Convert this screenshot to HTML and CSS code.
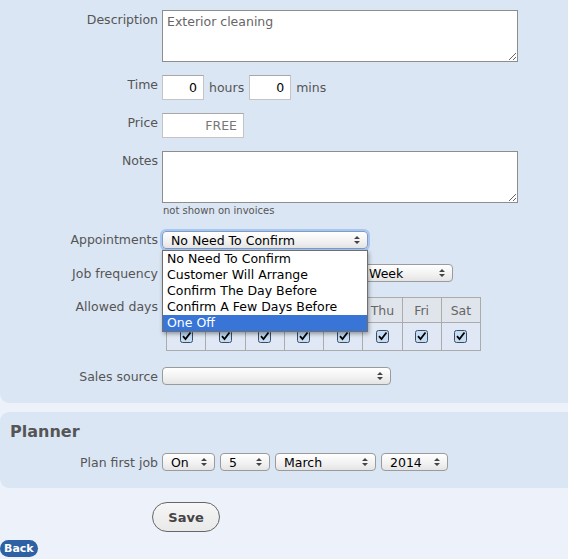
FILE: index.html
```html
<!DOCTYPE html>
<html>
<head>
<meta charset="utf-8">
<link rel="stylesheet" href="styles.css">
</head>
<body>
<div class="panel main">
  <div class="row r-desc">
    <label class="lbl">Description</label>
    <div class="field"><textarea class="area desc">Exterior cleaning</textarea></div>
  </div>
  <div class="row r-time">
    <label class="lbl">Time</label>
    <div class="field inline">
      <input class="num" value="0"><span class="unit">hours</span>
      <input class="num" value="0"><span class="unit">mins</span>
    </div>
  </div>
  <div class="row r-price">
    <label class="lbl">Price</label>
    <div class="field"><input class="price" placeholder="FREE"></div>
  </div>
  <div class="row r-notes">
    <label class="lbl">Notes</label>
    <div class="field">
      <textarea class="area notes"></textarea>
      <div class="hint">not shown on invoices</div>
    </div>
  </div>
  <div class="row r-appt">
    <label class="lbl">Appointments</label>
    <div class="field menu-host">
      <div class="select focused w-appt"><span>No Need To Confirm</span><svg class="arr" viewBox="0 0 6 10" width="6" height="10"><path d="M0 4 L3 1 L6 4Z M0 6 L3 9 L6 6Z"/></svg></div>
      <ul class="menu">
        <li>No Need To Confirm</li>
        <li>Customer Will Arrange</li>
        <li>Confirm The Day Before</li>
        <li>Confirm A Few Days Before</li>
        <li class="sel">One Off</li>
      </ul>
    </div>
  </div>
  <div class="row r-freq">
    <label class="lbl">Job frequency</label>
    <div class="field"><div class="select w-freq"><span class="freq-val">Week</span><svg class="arr" viewBox="0 0 6 10" width="6" height="10"><path d="M0 4 L3 1 L6 4Z M0 6 L3 9 L6 6Z"/></svg></div></div>
  </div>
  <div class="row r-days">
    <label class="lbl">Allowed days</label>
    <div class="field">
      <table class="days">
        <tr><th></th><th></th><th></th><th></th><th></th><th>Thu</th><th>Fri</th><th>Sat</th></tr>
        <tr>
          <td><svg class="cb" viewBox="0 0 13 13" width="13" height="13"><rect x="0.5" y="0.5" width="12" height="12" rx="2" fill="#c4dcf4" stroke="#3d4b60"/><path d="M3 6.2 L5.5 9 L10.5 2.5" fill="none" stroke="#000" stroke-width="1.8"/></svg></td>
          <td><svg class="cb" viewBox="0 0 13 13" width="13" height="13"><rect x="0.5" y="0.5" width="12" height="12" rx="2" fill="#c4dcf4" stroke="#3d4b60"/><path d="M3 6.2 L5.5 9 L10.5 2.5" fill="none" stroke="#000" stroke-width="1.8"/></svg></td>
          <td><svg class="cb" viewBox="0 0 13 13" width="13" height="13"><rect x="0.5" y="0.5" width="12" height="12" rx="2" fill="#c4dcf4" stroke="#3d4b60"/><path d="M3 6.2 L5.5 9 L10.5 2.5" fill="none" stroke="#000" stroke-width="1.8"/></svg></td>
          <td><svg class="cb" viewBox="0 0 13 13" width="13" height="13"><rect x="0.5" y="0.5" width="12" height="12" rx="2" fill="#c4dcf4" stroke="#3d4b60"/><path d="M3 6.2 L5.5 9 L10.5 2.5" fill="none" stroke="#000" stroke-width="1.8"/></svg></td>
          <td><svg class="cb" viewBox="0 0 13 13" width="13" height="13"><rect x="0.5" y="0.5" width="12" height="12" rx="2" fill="#c4dcf4" stroke="#3d4b60"/><path d="M3 6.2 L5.5 9 L10.5 2.5" fill="none" stroke="#000" stroke-width="1.8"/></svg></td>
          <td><svg class="cb" viewBox="0 0 13 13" width="13" height="13"><rect x="0.5" y="0.5" width="12" height="12" rx="2" fill="#c4dcf4" stroke="#3d4b60"/><path d="M3 6.2 L5.5 9 L10.5 2.5" fill="none" stroke="#000" stroke-width="1.8"/></svg></td>
          <td><svg class="cb" viewBox="0 0 13 13" width="13" height="13"><rect x="0.5" y="0.5" width="12" height="12" rx="2" fill="#c4dcf4" stroke="#3d4b60"/><path d="M3 6.2 L5.5 9 L10.5 2.5" fill="none" stroke="#000" stroke-width="1.8"/></svg></td>
          <td><svg class="cb" viewBox="0 0 13 13" width="13" height="13"><rect x="0.5" y="0.5" width="12" height="12" rx="2" fill="#c4dcf4" stroke="#3d4b60"/><path d="M3 6.2 L5.5 9 L10.5 2.5" fill="none" stroke="#000" stroke-width="1.8"/></svg></td>
        </tr>
      </table>
    </div>
  </div>
  <div class="row r-sales">
    <label class="lbl">Sales source</label>
    <div class="field"><div class="select w-sales"><span></span><svg class="arr" viewBox="0 0 6 10" width="6" height="10"><path d="M0 4 L3 1 L6 4Z M0 6 L3 9 L6 6Z"/></svg></div></div>
  </div>
</div>

<div class="panel planner">
  <h2 class="ptitle">Planner</h2>
  <div class="row r-plan">
    <label class="lbl">Plan first job</label>
    <div class="field inline plan">
      <div class="select w-on"><span>On</span><svg class="arr" viewBox="0 0 6 10" width="6" height="10"><path d="M0 4 L3 1 L6 4Z M0 6 L3 9 L6 6Z"/></svg></div>
      <div class="select w-day"><span>5</span><svg class="arr" viewBox="0 0 6 10" width="6" height="10"><path d="M0 4 L3 1 L6 4Z M0 6 L3 9 L6 6Z"/></svg></div>
      <div class="select w-month"><span>March</span><svg class="arr" viewBox="0 0 6 10" width="6" height="10"><path d="M0 4 L3 1 L6 4Z M0 6 L3 9 L6 6Z"/></svg></div>
      <div class="select w-year"><span>2014</span><svg class="arr" viewBox="0 0 6 10" width="6" height="10"><path d="M0 4 L3 1 L6 4Z M0 6 L3 9 L6 6Z"/></svg></div>
    </div>
  </div>
</div>

<div class="actions"><button class="save">Save</button></div>
<a class="back">Back</a>
</body>
</html>
```
FILE: styles.css
```css
html, body {
  margin: 0;
  padding: 0;
  background: #edf2fa;
  font-family: "DejaVu Sans", sans-serif;
  font-size: 12px;
  color: #555;
}
.panel {
  background: #dbe6f4;
}
.main {
  padding: 10px 0 18px;
  border-radius: 0 0 0 9px;
}
.planner {
  margin-top: 9px;
  padding: 10px 0 17px;
  border-radius: 9px 0 0 9px;
}
.row {
  display: flex;
  align-items: flex-start;
  gap: 4px;
}
.lbl {
  width: 158px;
  flex: none;
  text-align: right;
  font-size: 12.5px;
  line-height: 16px;
  padding-top: 2px;
  color: #555;
}
.field { position: relative; }
.inline { display: flex; align-items: center; gap: 4px; }
.plan { gap: 5px; }

.area {
  display: block;
  box-sizing: border-box;
  width: 356px;
  height: 52px;
  margin: 0;
  border: 1px solid #8e8e8e;
  background: #fff;
  font-family: "DejaVu Sans", sans-serif;
  font-size: 12.5px;
  color: #666;
  padding: 3px 4px;
  resize: both;
}
.r-time { margin-top: 13px; }
.r-price { margin-top: 13px; }
.r-notes { margin-top: 13px; }
.r-appt { margin-top: 13px; }
.r-freq { margin-top: 15px; }
.r-days { margin-top: 15px; }
.r-sales { margin-top: 16px; }

.num, .price {
  box-sizing: border-box;
  height: 25px;
  margin: 0;
  border: 1px solid #c4c4c4;
  border-top-color: #a8a8a8;
  background: #fff;
  font-family: "DejaVu Sans", sans-serif;
  font-size: 12.5px;
  color: #000;
  text-align: right;
  padding: 0 6px;
}
.num { width: 42px; }
.price { width: 82px; }
.price::placeholder { color: #777; }
.unit { font-size: 12.5px; color: #555; margin: 0 1px; }

.hint {
  font-size: 10px;
  color: #555;
  line-height: 12px;
  margin-top: 2px;
  padding-left: 1px;
}

.select {
  box-sizing: border-box;
  height: 18px;
  display: flex;
  align-items: center;
  justify-content: space-between;
  border: 1px solid #9b9b9b;
  border-radius: 4px;
  background: linear-gradient(#ffffff, #f1f1f1 60%, #e4e4e4);
  padding: 0 7px 0 8px;
  font-size: 12.5px;
  color: #000;
  white-space: nowrap;
  overflow: hidden;
}
.arr { flex: none; fill: #444; }
.focused {
  border-color: #7d9cc8;
  box-shadow: 0 0 0 2px #a9c6ee;
}
.w-appt { width: 206px; margin-top: 1px; }
.w-freq { width: 291px; }
.freq-val { padding-left: 198px; }
.w-sales { width: 229px; }
.w-on { width: 53px; }
.w-day { width: 50px; }
.w-month { width: 101px; }
.w-year { width: 67px; }

.menu {
  position: absolute;
  top: 20px;
  left: 0;
  width: 206px;
  box-sizing: border-box;
  margin: 0;
  padding: 0;
  list-style: none;
  background: #fff;
  border: 1px solid #6f6f6f;
  box-shadow: 1px 2px 4px rgba(0,0,0,0.35);
  z-index: 5;
}
.menu li {
  height: 16px;
  line-height: 16px;
  padding-left: 4px;
  font-size: 12.5px;
  color: #000;
}
.menu li.sel { background: #3875d6; color: #fff; }

.days {
  margin-left: 4px;
  border-collapse: collapse;
  table-layout: fixed;
  width: 315px;
}
.days th, .days td {
  border: 1px solid #ababab;
  text-align: center;
  padding: 0;
}
.days th {
  height: 24px;
  background: #e0e5ec;
  font-weight: normal;
  font-size: 12.5px;
  color: #666;
}
.days td { height: 27px; background: #dfe8f4; }
.cb { display: block; margin: 0 auto; }

.ptitle {
  margin: 0 0 11px 10px;
  font-size: 16px;
  line-height: 20px;
  font-weight: bold;
  color: #555;
}

.actions {
  padding: 14px 0 0 152px;
}
.save {
  width: 68px;
  height: 30px;
  border: 1px solid #666;
  border-radius: 15px;
  background: linear-gradient(#f6f6f6, #e9e9e9);
  font-family: "DejaVu Sans", sans-serif;
  font-size: 13px;
  font-weight: bold;
  color: #444;
  padding: 0;
}
.back {
  display: inline-block;
  margin-top: 8px;
  height: 17px;
  line-height: 17px;
  padding: 0 4px;
  border-radius: 9px;
  background: #2e60a4;
  color: #fff;
  font-size: 11px;
  font-weight: bold;
}
```
